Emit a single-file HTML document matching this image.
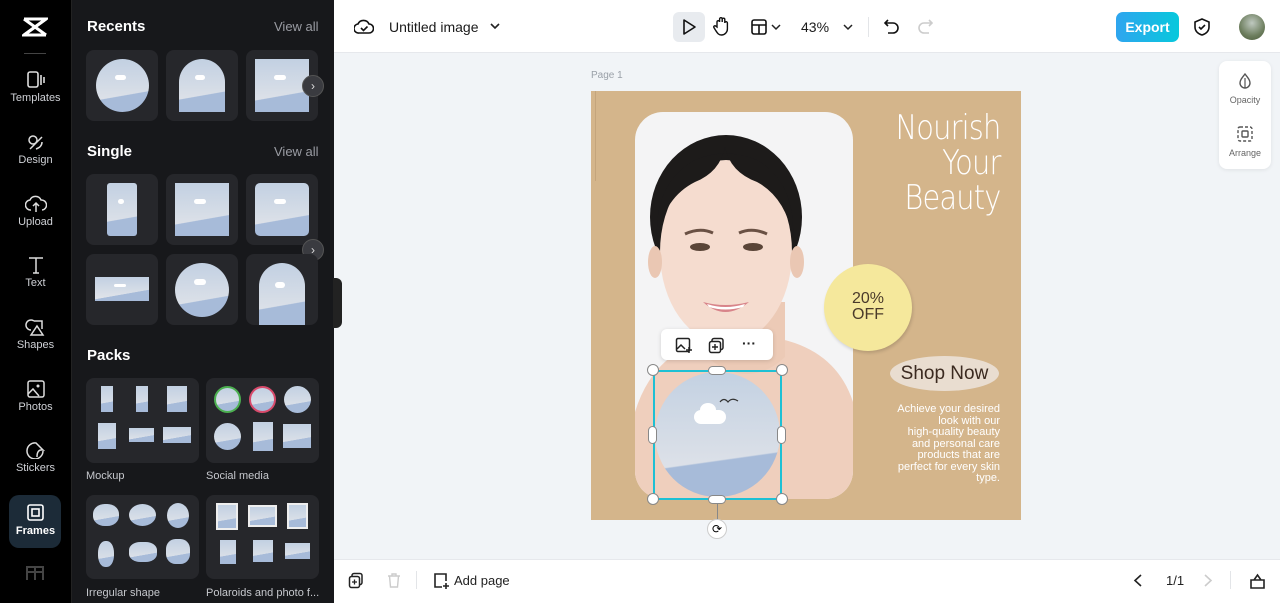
<!DOCTYPE html>
<html><head><meta charset="utf-8"><style>
*{box-sizing:border-box;margin:0;padding:0}
body{width:1280px;height:603px;overflow:hidden;font-family:"Liberation Sans",sans-serif;background:#f1f4f7;position:relative}
.abs{position:absolute}
#rail{left:0;top:0;width:71px;height:603px;background:#000}
#panel{left:71px;top:0;width:263px;height:603px;background:#17181b;border-left:1px solid #222}
.ri{position:absolute;left:0;width:71px;text-align:center;color:#cfd1d6;font-size:11px}
.ri svg{display:block;margin:0 auto 3px}
.h{position:absolute;color:#fff;font-weight:bold;font-size:15px}
.va{position:absolute;color:#9a9ca3;font-size:13px}
.cell{position:absolute;background:#26272b;border-radius:8px}
.th{position:absolute;background:linear-gradient(170deg,rgba(0,0,0,0) 66%,#a7bbd9 67%),linear-gradient(#c2d0e2,#e4e6ea);overflow:hidden}
.th:before{content:"";position:absolute;left:35%;top:30%;width:22%;height:10%;background:#fff;border-radius:6px}
.arr{position:absolute;width:22px;height:22px;border-radius:50%;background:#3a3b40;border:1px solid #555;color:#ddd;font-size:12px;text-align:center;line-height:20px}
.lbl{position:absolute;color:#c6c8cd;font-size:11px}
.mini{position:absolute;background:linear-gradient(170deg,rgba(0,0,0,0) 62%,#a7bbd9 63%),linear-gradient(#c2d0e2,#e4e6ea)}
</style></head><body>
<div id="rail" class="abs">
 <svg class="abs" style="left:22px;top:16px" width="26" height="22" viewBox="0 0 26 22"><path d="M2 3 L24 3 L2 19 L24 19" fill="none" stroke="#fff" stroke-width="3"/><path d="M2 3 Q13 11 24 19 M2 19 Q13 11 24 3" fill="none" stroke="#fff" stroke-width="3"/></svg>
 <div class="abs" style="left:24px;top:53px;width:22px;height:1px;background:#444"></div>
 <div class="ri" style="top:71px"><svg width="20" height="18"><rect x="2" y="1" width="10" height="15" rx="2" fill="none" stroke="#ddd" stroke-width="1.6"/><path d="M15 4v10M18 6v6" stroke="#ddd" stroke-width="1.6"/></svg>Templates</div>
 <div class="ri" style="top:133px"><svg width="20" height="18"><circle cx="7" cy="7" r="4" fill="none" stroke="#ddd" stroke-width="1.5"/><path d="M4 16 L16 4 M10 16 Q16 14 16 9" fill="none" stroke="#ddd" stroke-width="1.5"/></svg>Design</div>
 <div class="ri" style="top:195px"><svg width="22" height="18"><path d="M6 15 A5 5 0 0 1 5 5 A6 6 0 0 1 16 5 A5 5 0 0 1 17 15" fill="none" stroke="#ddd" stroke-width="1.5"/><path d="M11 17V8M8 11l3-3 3 3" fill="none" stroke="#ddd" stroke-width="1.5"/></svg>Upload</div>
 <div class="ri" style="top:256px"><svg width="20" height="18"><path d="M3 2H17M10 2V17M7 17h6" stroke="#ddd" stroke-width="1.5"/></svg>Text</div>
 <div class="ri" style="top:318px"><svg width="22" height="18"><path d="M9 3 A5 5 0 1 0 6 12 M9 3h8v8" fill="none" stroke="#ddd" stroke-width="1.5"/><path d="M12 8 L18 17 H6Z" fill="none" stroke="#ddd" stroke-width="1.5"/></svg>Shapes</div>
 <div class="ri" style="top:380px"><svg width="20" height="18"><rect x="2" y="1" width="16" height="16" rx="2" fill="none" stroke="#ddd" stroke-width="1.5"/><circle cx="12" cy="6" r="1.5" fill="#ddd"/><path d="M2 14l5-5 6 7" fill="none" stroke="#ddd" stroke-width="1.5"/></svg>Photos</div>
 <div class="ri" style="top:441px"><svg width="20" height="18"><path d="M17 10 A8 8 0 1 1 10 2 L17 9 Q11 8 11 16" fill="none" stroke="#ddd" stroke-width="1.5"/></svg>Stickers</div>
 <div class="abs" style="left:9px;top:495px;width:52px;height:53px;border-radius:10px;background:#1c2b38"></div>
 <div class="ri" style="top:504px;color:#fff;font-weight:bold"><svg width="20" height="18"><rect x="2" y="1" width="15" height="15" rx="2" fill="none" stroke="#fff" stroke-width="1.6"/><rect x="6" y="5" width="7" height="7" fill="none" stroke="#fff" stroke-width="1.6"/></svg>Frames</div>
 <svg class="abs" style="left:26px;top:566px" width="18" height="14"><rect x="1" y="1" width="16" height="14" fill="none" stroke="#444" stroke-width="2"/><path d="M9 1v14M1 6h16" stroke="#444" stroke-width="2"/></svg>
</div>
<div id="panel" class="abs">
 <div class="h" style="left:15px;top:18px">Recents</div><div class="va" style="left:202px;top:19px">View all</div>
 <div class="h" style="left:15px;top:143px">Single</div><div class="va" style="left:202px;top:144px">View all</div>
 <div class="h" style="left:15px;top:347px">Packs</div>
</div>
<div class="cell" style="left:86px;top:50px;width:72px;height:71px"><div class="th" style="left:10px;top:9px;width:53px;height:53px;border-radius:50%"></div></div>
<div class="cell" style="left:166px;top:50px;width:72px;height:71px"><div class="th" style="left:13px;top:9px;width:46px;height:53px;border-radius:23px 23px 0 0"></div></div>
<div class="cell" style="left:246px;top:50px;width:72px;height:71px"><div class="th" style="left:9px;top:9px;width:54px;height:53px"></div></div>
<div class="arr" style="left:302px;top:75px">›</div>
<div class="cell" style="left:86px;top:174px;width:72px;height:71px"><div class="th" style="left:21px;top:9px;width:30px;height:53px;border-radius:3px"></div></div>
<div class="cell" style="left:166px;top:174px;width:72px;height:71px"><div class="th" style="left:9px;top:9px;width:54px;height:53px"></div></div>
<div class="cell" style="left:246px;top:174px;width:72px;height:71px"><div class="th" style="left:9px;top:9px;width:54px;height:53px;border-radius:5px"></div></div>
<div class="arr" style="left:302px;top:239px">›</div>
<div class="cell" style="left:86px;top:254px;width:72px;height:71px"><div class="th" style="left:9px;top:23px;width:54px;height:24px"></div></div>
<div class="cell" style="left:166px;top:254px;width:72px;height:71px"><div class="th" style="left:9px;top:9px;width:54px;height:54px;border-radius:50%"></div></div>
<div class="cell" style="left:246px;top:254px;width:72px;height:71px"><div class="th" style="left:13px;top:9px;width:46px;height:62px;border-radius:23px 23px 0 0"></div></div>
<div class="cell" style="left:86px;top:378px;width:113px;height:85px">
 <div class="mini" style="left:15px;top:8px;width:12px;height:26px"></div><div class="mini" style="left:50px;top:8px;width:12px;height:26px"></div><div class="mini" style="left:81px;top:8px;width:20px;height:26px"></div>
 <div class="mini" style="left:12px;top:45px;width:18px;height:26px"></div><div class="mini" style="left:43px;top:50px;width:25px;height:14px"></div><div class="mini" style="left:77px;top:49px;width:28px;height:16px"></div></div>
<div class="cell" style="left:206px;top:378px;width:113px;height:85px">
 <div class="mini" style="left:8px;top:8px;width:27px;height:27px;border-radius:50%;border:2px solid #4caf50"></div><div class="mini" style="left:43px;top:8px;width:27px;height:27px;border-radius:50%;border:2px solid #d84a6b"></div><div class="mini" style="left:78px;top:8px;width:27px;height:27px;border-radius:50%"></div>
 <div class="mini" style="left:8px;top:45px;width:27px;height:27px;border-radius:50%"></div><div class="mini" style="left:47px;top:44px;width:20px;height:29px"></div><div class="mini" style="left:77px;top:46px;width:28px;height:24px"></div></div>
<div class="lbl" style="left:86px;top:470px">Mockup</div><div class="lbl" style="left:206px;top:470px">Social media</div>
<div class="cell" style="left:86px;top:495px;width:113px;height:84px">
 <div class="mini" style="left:7px;top:9px;width:26px;height:22px;border-radius:45%"></div><div class="mini" style="left:43px;top:9px;width:27px;height:22px;border-radius:50%"></div><div class="mini" style="left:81px;top:8px;width:22px;height:25px;border-radius:50%"></div>
 <div class="mini" style="left:12px;top:46px;width:16px;height:26px;border-radius:45%"></div><div class="mini" style="left:43px;top:47px;width:28px;height:20px;border-radius:40%"></div><div class="mini" style="left:80px;top:44px;width:24px;height:25px;border-radius:40%"></div></div>
<div class="cell" style="left:206px;top:495px;width:113px;height:84px">
 <div class="mini" style="left:10px;top:8px;width:22px;height:27px;border:2px solid #eee"></div><div class="mini" style="left:42px;top:10px;width:29px;height:22px;border:2px solid #eee"></div><div class="mini" style="left:81px;top:8px;width:21px;height:26px;border:2px solid #eee"></div>
 <div class="mini" style="left:14px;top:45px;width:16px;height:24px"></div><div class="mini" style="left:47px;top:45px;width:20px;height:22px"></div><div class="mini" style="left:79px;top:48px;width:25px;height:16px"></div></div>
<div class="lbl" style="left:86px;top:587px">Irregular shape</div><div class="lbl" style="left:206px;top:587px">Polaroids and photo f...</div>
<div class="abs" style="left:333px;top:278px;width:9px;height:50px;background:#222;border-radius:0 6px 6px 0"></div>
<div class="abs" style="left:334px;top:0;width:946px;height:53px;background:#fff;border-bottom:1px solid #e6e8ec"></div>
<svg class="abs" style="left:354px;top:18px" width="20" height="18"><path d="M5 15 A4.5 4.5 0 0 1 4 6 A6 6 0 0 1 15 6 A4.5 4.5 0 0 1 15 15Z" fill="none" stroke="#111" stroke-width="1.6"/><path d="M7 10l2.5 2.5 4-4" fill="none" stroke="#111" stroke-width="1.6"/></svg>
<div class="abs" style="left:389px;top:19px;font-size:14px;color:#1a1a1a">Untitled image</div>
<svg class="abs" style="left:490px;top:22px" width="10" height="8"><path d="M1 2l4 4 4-4" fill="none" stroke="#222" stroke-width="1.6"/></svg>
<div class="abs" style="left:673px;top:12px;width:32px;height:30px;background:#e8ebef;border-radius:6px"></div>
<svg class="abs" style="left:681px;top:18px" width="16" height="18"><path d="M3 2 L14 9 L3 16Z" fill="none" stroke="#111" stroke-width="1.6" stroke-linejoin="round"/></svg>
<svg class="abs" style="left:712px;top:16px" width="20" height="20"><path d="M5 11V6a1.3 1.3 0 0 1 2.6 0V3a1.3 1.3 0 0 1 2.6 0v3V3.5a1.3 1.3 0 0 1 2.6 0V7a1.3 1.3 0 0 1 2.6 0v6a6 6 0 0 1-6 6c-3 0-4-2-6-5l-1.5-2.5a1.2 1.2 0 0 1 2-1.3Z" fill="none" stroke="#111" stroke-width="1.4"/></svg>
<svg class="abs" style="left:750px;top:18px" width="18" height="18"><rect x="2" y="2" width="14" height="14" rx="2" fill="none" stroke="#111" stroke-width="1.6"/><path d="M2 7h14M9 7v9" stroke="#111" stroke-width="1.6"/></svg>
<svg class="abs" style="left:771px;top:23px" width="10" height="8"><path d="M1 2l4 4 4-4" fill="none" stroke="#222" stroke-width="1.5"/></svg>
<div class="abs" style="left:801px;top:19px;font-size:14px;color:#1a1a1a">43%</div>
<svg class="abs" style="left:843px;top:23px" width="10" height="8"><path d="M1 2l4 4 4-4" fill="none" stroke="#222" stroke-width="1.5"/></svg>
<div class="abs" style="left:868px;top:17px;width:1px;height:20px;background:#e3e5e8"></div>
<svg class="abs" style="left:883px;top:18px" width="18" height="18"><path d="M5 2L2 5l3 3M2 5h8a5 5 0 0 1 0 10H5" fill="none" stroke="#111" stroke-width="1.6"/></svg>
<svg class="abs" style="left:916px;top:18px" width="18" height="18"><path d="M13 2l3 3-3 3M16 5H8a5 5 0 0 0 0 10h5" fill="none" stroke="#ccc" stroke-width="1.6"/></svg>
<div class="abs" style="left:1116px;top:12px;width:63px;height:30px;border-radius:7px;background:linear-gradient(90deg,#2fa5ef,#07c8dc);color:#fff;font-weight:bold;font-size:14px;text-align:center;line-height:30px">Export</div>
<svg class="abs" style="left:1193px;top:17px" width="18" height="20"><path d="M9 2L2 5v5c0 4 3 7 7 8 4-1 7-4 7-8V5Z" fill="none" stroke="#111" stroke-width="1.6"/><path d="M6 10l2 2 4-4" fill="none" stroke="#111" stroke-width="1.6"/></svg>
<div class="abs" style="left:1239px;top:14px;width:26px;height:26px;border-radius:50%;background:radial-gradient(circle at 50% 35%,#bfc9c0,#6d7e5e 60%,#4a5a3a)"></div>
<div class="abs" style="left:1219px;top:61px;width:52px;height:108px;background:#fff;border-radius:8px;box-shadow:0 1px 4px rgba(0,0,0,.08)"></div>
<svg class="abs" style="left:1237px;top:72px" width="16" height="18"><path d="M8 2C5 6 3 8 3 11a5 5 0 0 0 10 0C13 8 11 6 8 2Z" fill="none" stroke="#555" stroke-width="1.4"/><path d="M8 6v10" stroke="#555" stroke-width="1.2"/></svg>
<div class="abs" style="left:1219px;top:95px;width:52px;text-align:center;font-size:9px;color:#666">Opacity</div>
<svg class="abs" style="left:1236px;top:125px" width="18" height="18"><rect x="2" y="2" width="14" height="14" rx="2" fill="none" stroke="#555" stroke-width="1.4" stroke-dasharray="3 2"/><rect x="6" y="6" width="6" height="6" rx="1" fill="none" stroke="#555" stroke-width="1.4"/></svg>
<div class="abs" style="left:1219px;top:148px;width:52px;text-align:center;font-size:9px;color:#666">Arrange</div>
<div class="abs" style="left:591px;top:70px;font-size:10px;color:#9aa0a8">Page 1</div>
<div class="abs" style="left:591px;top:91px;width:430px;height:429px;background:#d4b58b;overflow:hidden">
 <div class="abs" style="left:44px;top:21px;width:218px;height:387px;border-radius:28px;background:#f4f4f5;overflow:hidden">
  <svg width="218" height="387">
   <path d="M0 300 Q20 235 85 225 L135 225 Q200 235 218 290 L218 387 L0 387Z" fill="#efcfbd"/>
   <path d="M72 190 L72 245 Q92 262 112 262 Q132 262 150 245 L150 190Z" fill="#eccab6"/>
   <ellipse cx="91" cy="105" rx="76" ry="82" fill="#1d1b1a"/>
   <ellipse cx="91" cy="140" rx="66" ry="92" fill="#f5dccf"/>
   <path d="M22 125 Q20 70 60 48 Q90 35 122 48 Q160 70 158 125 Q150 85 122 70 Q95 60 90 35 Q85 60 60 70 Q30 85 22 125Z" fill="#1d1b1a"/>
   <ellipse cx="20" cy="150" rx="7" ry="16" fill="#eac7b3"/><ellipse cx="162" cy="150" rx="7" ry="16" fill="#eac7b3"/>
   <ellipse cx="65" cy="135" rx="10" ry="4" fill="#5a4538"/><ellipse cx="118" cy="135" rx="10" ry="4" fill="#5a4538"/>
   <path d="M50 122 Q65 115 78 121 M104 121 Q117 115 132 122" stroke="#6a5144" stroke-width="3" fill="none"/>
   <path d="M68 190 Q90 210 114 190 Q90 196 68 190Z" fill="#d8848a"/>
   <path d="M72 192 Q90 198 110 192 L108 195 Q90 200 74 195Z" fill="#fff"/>
  </svg>
 </div>
 <div class="abs" style="right:21px;top:20px;text-align:right;color:#fff;font-size:34px;line-height:35px;font-weight:300;font-family:'DejaVu Sans','Liberation Sans',sans-serif;letter-spacing:-1px;transform:scaleX(.85);transform-origin:right">Nourish<br>Your<br>Beauty</div>
 <div class="abs" style="left:233px;top:173px;width:88px;height:87px;border-radius:50%;background:#f5e89c;box-shadow:1px 2px 3px rgba(0,0,0,.15);color:#4a3a2a;font-size:16px;line-height:16px;text-align:center;padding-top:27px">20%<br>OFF</div>
 <div class="abs" style="left:299px;top:265px;width:109px;height:35px;border-radius:50%;background:#e9ddd0;color:#3b2a20;font-size:19px;text-align:center;line-height:35px">Shop Now</div>
 <div class="abs" style="right:21px;top:313px;text-align:right;color:#fff;font-size:11px;line-height:11.5px;white-space:nowrap">Achieve your desired<br>look with our<br>high-quality beauty<br>and personal care<br>products that are<br>perfect for every skin<br>type.</div>
 <div class="abs" style="left:4px;top:0;width:1px;height:90px;background:#c4a57c"></div>
</div>
<div class="abs" style="left:655px;top:372px;width:125px;height:125px;border-radius:50%;background:linear-gradient(172deg,rgba(0,0,0,0) 68%,#a7bbd9 69%),linear-gradient(#c3d1e2,#e5e6ea)"></div>
<div class="abs" style="left:694px;top:410px;width:32px;height:14px;background:#fff;border-radius:8px"></div>
<div class="abs" style="left:700px;top:403px;width:16px;height:14px;background:#fff;border-radius:50%"></div>
<svg class="abs" style="left:718px;top:396px" width="24" height="10"><path d="M2 6 Q6 1 10 6 Q14 1 20 5" fill="none" stroke="#333" stroke-width="1.2"/></svg>
<div class="abs" style="left:653px;top:370px;width:129px;height:130px;border:2px solid #1ec0d4"></div>
<div class="abs" style="left:717px;top:500px;width:1px;height:20px;background:#888"></div>
<div class="abs" style="left:707px;top:519px;width:20px;height:20px;border-radius:50%;background:#fff;border:1px solid #ccc;font-size:12px;text-align:center;line-height:18px">⟳</div>
<div class="abs" style="left:647px;top:364px;width:12px;height:12px;border-radius:50%;background:#fff;border:1px solid #888"></div>
<div class="abs" style="left:776px;top:364px;width:12px;height:12px;border-radius:50%;background:#fff;border:1px solid #888"></div>
<div class="abs" style="left:647px;top:493px;width:12px;height:12px;border-radius:50%;background:#fff;border:1px solid #888"></div>
<div class="abs" style="left:776px;top:493px;width:12px;height:12px;border-radius:50%;background:#fff;border:1px solid #888"></div>
<div class="abs" style="left:708px;top:366px;width:18px;height:9px;border-radius:5px;background:#fff;border:1px solid #888"></div>
<div class="abs" style="left:708px;top:495px;width:18px;height:9px;border-radius:5px;background:#fff;border:1px solid #888"></div>
<div class="abs" style="left:648px;top:426px;width:9px;height:18px;border-radius:5px;background:#fff;border:1px solid #888"></div>
<div class="abs" style="left:777px;top:426px;width:9px;height:18px;border-radius:5px;background:#fff;border:1px solid #888"></div>
<div class="abs" style="left:661px;top:329px;width:112px;height:31px;background:#fff;border-radius:6px;box-shadow:0 1px 4px rgba(0,0,0,.15)"></div>
<svg class="abs" style="left:675px;top:337px" width="18" height="17"><rect x="1.5" y="1.5" width="13" height="13" rx="1.5" fill="none" stroke="#222" stroke-width="1.5"/><path d="M2 12l4-4 4 4" fill="none" stroke="#222" stroke-width="1.5"/><path d="M14 10v6M11 13h6" stroke="#222" stroke-width="1.5"/></svg>
<svg class="abs" style="left:708px;top:337px" width="17" height="17"><rect x="4" y="1.5" width="11" height="11" rx="2" fill="none" stroke="#222" stroke-width="1.5"/><rect x="1.5" y="4.5" width="11" height="11" rx="2" fill="#fff" stroke="#222" stroke-width="1.5"/><path d="M7 7v6M4 10h6" stroke="#222" stroke-width="1.4"/></svg>
<div class="abs" style="left:742px;top:335px;font-size:14px;font-weight:bold;color:#222">···</div>
<div class="abs" style="left:334px;top:559px;width:946px;height:44px;background:#fff;border-top:1px solid #e6e8ec"></div>
<svg class="abs" style="left:348px;top:572px" width="16" height="17"><rect x="4" y="1.5" width="10" height="11" rx="2" fill="none" stroke="#222" stroke-width="1.5"/><rect x="1.5" y="4.5" width="10" height="11" rx="2" fill="#fff" stroke="#222" stroke-width="1.5"/><path d="M6.5 7.5v5M4 10h5" stroke="#222" stroke-width="1.3"/></svg>
<svg class="abs" style="left:386px;top:572px" width="16" height="17"><path d="M2 4h12M6 4V2h4v2M3.5 4l1 11h7l1-11" fill="none" stroke="#ccc" stroke-width="1.4"/></svg>
<div class="abs" style="left:416px;top:571px;width:1px;height:18px;background:#e3e5e8"></div>
<svg class="abs" style="left:432px;top:572px" width="18" height="18"><path d="M10 15H3V2h11v7" fill="none" stroke="#222" stroke-width="1.6"/><path d="M14 11v6M11 14h6" stroke="#222" stroke-width="1.6"/></svg>
<div class="abs" style="left:454px;top:573px;font-size:13px;color:#222">Add page</div>
<svg class="abs" style="left:1133px;top:573px" width="10" height="15"><path d="M8 2L2 7.5 8 13" fill="none" stroke="#222" stroke-width="1.6"/></svg>
<div class="abs" style="left:1166px;top:573px;font-size:13px;color:#222">1/1</div>
<svg class="abs" style="left:1203px;top:573px" width="10" height="15"><path d="M2 2l6 5.5L2 13" fill="none" stroke="#ccc" stroke-width="1.6"/></svg>
<div class="abs" style="left:1230px;top:571px;width:1px;height:18px;background:#e3e5e8"></div>
<svg class="abs" style="left:1249px;top:572px" width="17" height="17"><path d="M2 8h13v8H2Z M5 8l3.5-5 3.5 5" fill="none" stroke="#222" stroke-width="1.6"/></svg>
</body></html>
